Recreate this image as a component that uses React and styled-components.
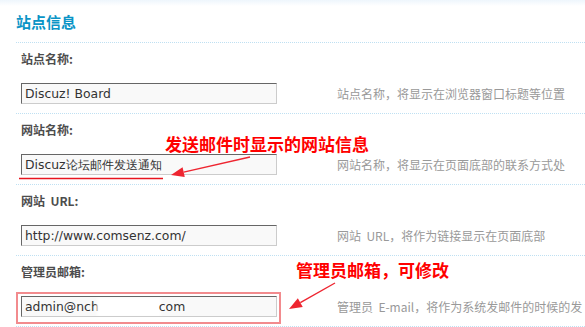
import React from "react";
import styled, { createGlobalStyle } from "styled-components";

const GlobalStyle = createGlobalStyle`
  html, body {
    margin: 0;
    padding: 0;
    background: #fff;
    overflow: hidden;
  }
  body {
    font-family: "Noto Sans CJK SC", "DejaVu Sans", sans-serif;
    font-size: 12px;
  }
`;

const Page = styled.div`
  position: relative;
  width: 585px;
  height: 327px;
  overflow: hidden;
  background: linear-gradient(#eef6fc 0, #fff 6px);
`;

const Section = styled.div`
  margin-left: 16px;
`;

const Title = styled.h3`
  margin: 0;
  padding: 10px 0 8px;
  line-height: 24px;
  font-size: 15px;
  font-weight: 700;
  color: #0a94c6;
  border-bottom: 1px dotted #bfe0f2;
`;

const Row = styled.div`
  padding: 6px 0 9px 5px;
  border-bottom: 1px dotted #bfe0f2;
`;

const Label = styled.div`
  line-height: 20px;
  font-size: 12px;
  font-weight: 700;
  color: #4d4d4d;
  white-space: pre;
  margin-bottom: 14px;
`;

const Line = styled.div`
  display: flex;
  align-items: center;
  white-space: nowrap;
`;

const Highlight = styled.div`
  margin: -4px -4px -7px -5px;
  padding: 2px 2px 5px 3px;
  border: 2px solid #f28b8e;
`;

const Field = styled.div`
  box-sizing: border-box;
  width: 256px;
  height: 21px;
  padding: 0 3px;
  line-height: 19px;
  background: #f9f9f9;
  border: 1px solid #ccc;
  border-top-color: #666;
  border-left-color: #666;
  font-family: "DejaVu Sans", Verdana, sans-serif;
  font-size: 12.4px;
  color: #333;
  white-space: nowrap;
  overflow: hidden;
`;

const Blur = styled.span`
  display: inline-block;
  width: 60px;
  height: 15px;
  vertical-align: middle;
  background: #fff;
  box-shadow: 0 0 3px 2px #fff;
`;

const Desc = styled.div`
  margin-left: 60px;
  font-size: 12px;
  line-height: 16px;
  color: #999;
  white-space: pre;
`;

const Callout = styled.div`
  position: absolute;
  left: ${(p) => p.$x}px;
  top: ${(p) => p.$y}px;
  font-size: 17px;
  line-height: 17px;
  font-weight: 700;
  color: #f00;
  white-space: nowrap;
`;

const Marks = styled.svg`
  position: absolute;
  left: 0;
  top: 0;
  pointer-events: none;
`;

const rows = [
  {
    label: "站点名称:",
    value: "Discuz! Board",
    desc: "站点名称，将显示在浏览器窗口标题等位置",
  },
  {
    label: "网站名称:",
    value: "Discuz论坛邮件发送通知",
    desc: "网站名称，将显示在页面底部的联系方式处",
  },
  {
    label: "网站  URL:",
    value: "http://www.comsenz.com/",
    desc: "网站  URL，将作为链接显示在页面底部",
  },
  {
    label: "管理员邮箱:",
    value: (
      <>
        admin@nch
        <Blur />
        com
      </>
    ),
    desc: "管理员  E-mail，将作为系统发邮件的时候的发",
    marked: true,
  },
];

const Arrow = ({ x1, y1, x2, y2 }) => {
  const a = Math.atan2(y2 - y1, x2 - x1);
  const len = 13;
  const w = 5;
  const bx = x2 - len * Math.cos(a);
  const by = y2 - len * Math.sin(a);
  const px = -Math.sin(a) * w;
  const py = Math.cos(a) * w;
  return (
    <g fill="#ee2530" stroke="#ee2530">
      <line x1={x1} y1={y1} x2={bx} y2={by} strokeWidth="1.4" />
      <polygon
        stroke="none"
        points={`${x2},${y2} ${bx + px},${by + py} ${bx - px},${by - py}`}
      />
    </g>
  );
};

export default function App() {
  return (
    <Page>
      <GlobalStyle />
      <Section>
        <Title>站点信息</Title>
        {rows.map((r) => {
          const field = <Field>{r.value}</Field>;
          return (
            <Row key={r.label}>
              <Label>{r.label}</Label>
              <Line>
                {r.marked ? <Highlight>{field}</Highlight> : field}
                <Desc>{r.desc}</Desc>
              </Line>
            </Row>
          );
        })}
      </Section>

      <Callout $x={165} $y={135}>发送邮件时显示的网站信息</Callout>
      <Callout $x={296} $y={261}>管理员邮箱，可修改</Callout>

      <Marks width="585" height="327">
        <line x1="19" y1="178.5" x2="163" y2="178.5" stroke="#e8141e" strokeWidth="1.5" />
        <Arrow x1={250} y1={157} x2={171} y2={175} />
        <Arrow x1={335} y1={283} x2={289} y2={309} />
      </Marks>
    </Page>
  );
}
